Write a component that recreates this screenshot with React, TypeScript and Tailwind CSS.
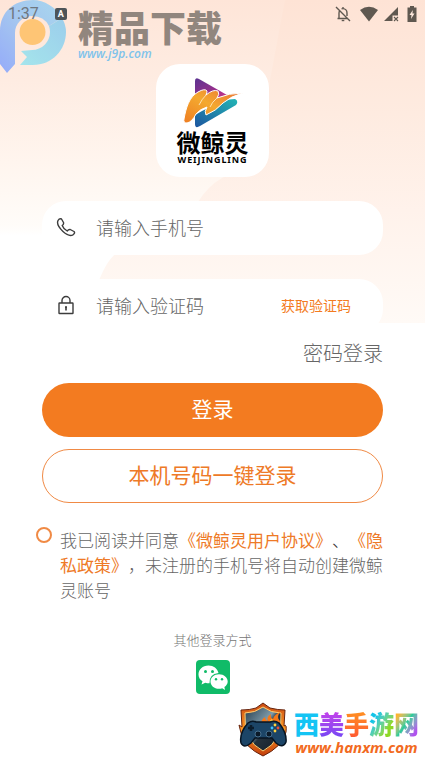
import type { ReactNode } from "react";

function Backdrop() {
  return (
    <svg
      className="absolute inset-x-0 top-0 -z-10 h-[323px] w-full"
      viewBox="0 0 425 323"
      preserveAspectRatio="none"
      aria-hidden="true"
    >
      <defs>
        <linearGradient id="bgLeft" x1="0" y1="0" x2="0" y2="1">
          <stop offset="0" stopColor="#fee5d8" />
          <stop offset="0.25" stopColor="#feece2" />
          <stop offset="0.5" stopColor="#fff5ee" />
          <stop offset="0.7" stopColor="#fffcf9" />
          <stop offset="0.73" stopColor="#ffffff" />
          <stop offset="1" stopColor="#ffffff" />
        </linearGradient>
        <linearGradient id="bgRight" x1="0" y1="0" x2="0" y2="1">
          <stop offset="0" stopColor="#fee3d5" />
          <stop offset="0.35" stopColor="#feebe0" />
          <stop offset="0.65" stopColor="#fff2eb" />
          <stop offset="1" stopColor="#fffaf6" />
        </linearGradient>
      </defs>
      <rect width="425" height="323" fill="url(#bgLeft)" />
      <path d="M425 0H285L270 80Q262 158 222 178Q208 186 198 202L120 250Q108 258 100 278L80 323H425Z" fill="url(#bgRight)" />
    </svg>
  );
}

function StatusBar() {
  return (
    <div className="relative z-10 flex h-7 items-center justify-between pr-2 pl-2 text-[#5f5850]">
      <div className="flex items-center gap-4">
        <span className="font-[Roboto,sans-serif] text-base leading-7 text-[#6f7780]">1:37</span>
        <span
          className="flex size-3 items-center justify-center rounded-xs bg-[#4d5458] font-[Roboto,sans-serif] text-[9px] leading-3 font-bold text-white"
        >
          A
        </span>
      </div>
      <div className="flex items-center gap-2" aria-hidden="true">
        <svg className="size-4" viewBox="0 0 16 16" fill="none" stroke="currentColor" strokeWidth="1.4">
          <path d="M1 1l14 14M4 12V7c0-1.200.4-2 1-2.700M6.500 3C7 2.700 7.500 2.600 8 2.600c2.400 0 4 2 4 4.400v3M2.500 12.500h10M8 1v1.600" />
          <path d="M6.700 14.500h2.600" />
        </svg>
        <div className="flex items-center gap-1">
          <svg className="h-4 w-5" viewBox="0 0 20 16" fill="currentColor">
            <path d="M1 4Q10-2.500 19 4L10 15.500Z" />
          </svg>
          <svg className="size-4" viewBox="0 0 16 16" fill="currentColor">
            <path d="M15 1v8.500H9.500V15H1Z" />
            <path d="M11 11l4 4m0-4l-4 4" stroke="currentColor" strokeWidth="1.100" />
          </svg>
        </div>
        <svg className="h-4 w-2.5" viewBox="0 0 10 16">
          <path d="M3 0h4v1.500h2.500V16h-9V1.500H3Z" fill="currentColor" />
          <path d="M5.800 4L2.500 9h2L4 13l3.500-5.500h-2Z" fill="#fee9dd" />
        </svg>
      </div>
    </div>
  );
}

function DownloadMark() {
  return (
    <div className="absolute top-0 left-0 flex gap-3">
      <svg className="h-[74px] w-[66px] opacity-80" viewBox="0 0 66 74" aria-hidden="true">
        <defs>
          <linearGradient id="pStem" x1="0" y1="1" x2="1" y2="0">
            <stop offset="0" stopColor="#7b9cff" />
            <stop offset="0.5" stopColor="#8fbff5" />
            <stop offset="1" stopColor="#93d3f4" />
          </linearGradient>
          <linearGradient id="pTail" x1="0" y1="1" x2="1" y2="0">
            <stop offset="0" stopColor="#8fe4ef" />
            <stop offset="1" stopColor="#84c8f0" />
          </linearGradient>
        </defs>
        <path
          d="M0 31C0 12 14 0 33 0C44 0 56 7 62 18L49 26Q44 16 32 16C22 16 15 24 15 33V64L7 73L0 64Z"
          fill="url(#pStem)"
        />
        <path d="M62 18Q66 25 66 32C66 50 52 65 33 65H20L27 57L21 51L32 50C42 50 50 42 50 32Q50 29 49 26Z" fill="url(#pTail)" />
        <circle cx="32.500" cy="32" r="13" fill="#ffbd5c" />
      </svg>
      <div className="pt-1">
        <p className="font-['Noto_Sans_CJK_SC',sans-serif] text-4xl leading-11 font-black text-[#91867e]">精品下载</p>
        <p className="font-['Open_Sans',sans-serif] text-xs leading-3 font-semibold text-[#80c3eb] italic">www.j9p.com</p>
      </div>
    </div>
  );
}

function AppLogo() {
  return (
    <div className="mx-auto mt-9 flex h-[113px] w-[113px] flex-col items-center rounded-3xl bg-white pt-3">
      <svg className="h-[52px] w-[62px]" viewBox="0 0 62 52" aria-hidden="true">
        <defs>
          <linearGradient id="lgPurple" x1="0" y1="0" x2="1" y2="1">
            <stop offset="0" stopColor="#5b3391" />
            <stop offset="0.6" stopColor="#9a2f8c" />
            <stop offset="1" stopColor="#d0358a" />
          </linearGradient>
          <linearGradient id="lgBlue" x1="0" y1="1" x2="1" y2="0">
            <stop offset="0" stopColor="#1d559f" />
            <stop offset="1" stopColor="#22b5b5" />
          </linearGradient>
          <linearGradient id="lgGold" x1="0" y1="1" x2="1" y2="0">
            <stop offset="0" stopColor="#ee7d22" />
            <stop offset="0.5" stopColor="#f4a92f" />
            <stop offset="1" stopColor="#ea6f35" />
          </linearGradient>
        </defs>
        <path d="M13 5Q13 1 17 3L45 19L30 24L13 24Z" fill="url(#lgPurple)" />
        <path d="M13 39L20 35L42 24L53 23Q57 25 54 29L18 50Q13 53 13 48Z" fill="url(#lgBlue)" />
        <path
          d="M2 43C4 32 7 21 16 16Q23 12 25 15Q25 17 24 19Q31 13 36 15Q38 18 35 22Q47 17 61 17Q49 20 41 27Q34 35 24 39Q22 36 25 31Q18 33 14 38Q10 46 5 47Q1 47 2 43Z"
          fill="url(#lgGold)"
          stroke="#fff"
          strokeWidth="1"
          strokeLinejoin="round"
        />
        <path d="M24 19Q20 23 17 29M35 22Q30 26 28 31" fill="none" stroke="#fff0cf" strokeWidth="0.800" />
      </svg>
      <p className="font-['Noto_Sans_CJK_SC',sans-serif] text-2xl leading-7 font-bold text-black">微鲸灵</p>
      <p className="font-['Noto_Sans',sans-serif] text-[9px] leading-2 font-bold tracking-widest text-black">WEIJINGLING</p>
    </div>
  );
}

function PhoneIcon() {
  return (
    <svg className="size-5" viewBox="0 0 20 20" fill="none" stroke="#3c3c3c" strokeWidth="1.400" strokeLinejoin="round" aria-hidden="true">
      <path d="M2 3.500Q3.500 1 5.500 2L7.500 5.500Q8 7 6.200 8.500Q7.500 12 11.200 14Q12.500 12.200 14.200 12.500L18 14.500Q19.500 16 17 17.800Q13 20 7 14.500Q0 8 2 3.500Z" />
    </svg>
  );
}

function LockIcon() {
  return (
    <svg className="size-5" viewBox="0 0 20 20" fill="none" stroke="#3c3c3c" strokeWidth="1.400" aria-hidden="true">
      <rect x="3" y="8" width="14" height="10.500" rx="0.500" />
      <path d="M6 8V5.500a4 4 0 0 1 8 0V8" />
      <path d="M10 11.500v4M9 12h2" strokeWidth="1.600" />
    </svg>
  );
}

function Field({ id, label, icon, children }: { id: string; label: string; icon: ReactNode; children?: ReactNode }) {
  return (
    <div className="flex h-[54px] items-center rounded-3xl bg-white pr-8 pb-0.5 pl-3.5">
      <label htmlFor={id} aria-label={label}>
        {icon}
      </label>
      <input
        id={id}
        type="tel"
        placeholder={label}
        className="ml-5 h-8 min-w-0 flex-1 bg-transparent text-lg font-light text-[#666666] outline-none placeholder:text-[#666666]"
      />
      {children}
    </div>
  );
}

function WeChatIcon() {
  return (
    <svg className="size-[34px]" viewBox="0 0 34 34" aria-hidden="true">
      <rect width="34" height="34" rx="4" fill="#10bb68" />
      <path d="M12.500 5.500C6.500 5.500 2.500 9.500 2.500 14.500c0 3 1.500 5.300 4 6.800L5.500 24.500l3.800-1.700q1.800.5 4.200.5Q13 14 22.500 13C21.500 8.500 17.500 5.500 12.500 5.500Z" fill="#fff" />
      <path d="M23 14.200c-5 0-8.500 3.300-8.500 7.300s3.500 7.300 8.500 7.300q1.800 0 3.200-.5L29 30l-.6-3c2-1.300 3.300-3.200 3.300-5.500 0-4-3.700-7.300-8.700-7.300Z" fill="#fff" />
      <g fill="#10bb68">
        <circle cx="9.500" cy="11.500" r="1.500" />
        <circle cx="16.500" cy="11.500" r="1.500" />
        <circle cx="20" cy="19.300" r="1.200" />
        <circle cx="26" cy="19.300" r="1.200" />
      </g>
    </svg>
  );
}

function SiteMark() {
  return (
    <div className="absolute right-1.5 bottom-0 flex items-end gap-1.5">
      <svg className="h-[56px] w-[50px]" viewBox="0 0 50 56" aria-hidden="true">
        <defs>
          <linearGradient id="shieldFire" x1="0" y1="0" x2="0" y2="1">
            <stop offset="0" stopColor="#c94a12" />
            <stop offset="0.5" stopColor="#ff9a24" />
            <stop offset="1" stopColor="#c23d0b" />
          </linearGradient>
          <linearGradient id="shieldCore" x1="0" y1="0" x2="1" y2="1">
            <stop offset="0" stopColor="#243a4b" />
            <stop offset="0.45" stopColor="#7f9cab" />
            <stop offset="0.55" stopColor="#24323d" />
            <stop offset="1" stopColor="#111b27" />
          </linearGradient>
        </defs>
        <path d="M25 2L32 7Q40 9 47 9L46 25Q49 22 48 31Q44 46 25 55Q6 46 3 32L1 24L4 26L3 9Q12 9 18 7Z" fill="url(#shieldFire)" stroke="#67230d" />
        <path d="M25 6Q33 12 43 12Q45 40 25 50Q5 40 7 12Q17 12 25 6Z" fill="url(#shieldCore)" stroke="#ffd074" />
        <path d="M24 24Q22 19 27 16Q27 19 30 20Q28 16 33 13Q32 17 35 18Q36 14 42 11Q38 17 42 20Q42 25 38 28H27Z" fill="#f77716" />
        <path d="M31 24Q30 21 34 18Q35 22 39 20Q39 24 36 26Z" fill="#ffd34c" />
        <path
          d="M10 22Q14 19 18 21H32Q37 19 41 22Q49 32 48 41Q45 48 38 42L34 37H17L13 42Q6 48 3 42Q1 32 10 22Z"
          fill="#1c4567"
          stroke="#071523"
          strokeWidth="1.500"
        />
        <path d="M10 27h6M13 24v6" stroke="#0b1c2c" strokeWidth="2.500" />
        <circle cx="20" cy="33" r="3" fill="#0b1a29" stroke="#47708f" />
        <circle cx="31" cy="33" r="3" fill="#0b1a29" stroke="#47708f" />
        <circle cx="37" cy="24" r="1.400" fill="#ffd23d" />
        <circle cx="40" cy="27" r="1.400" fill="#f04c35" />
        <circle cx="34" cy="27" r="1.400" fill="#3cc3ff" />
        <circle cx="37" cy="30" r="1.400" fill="#ffd23d" />
      </svg>
      <div className="flex flex-col items-center">
        <p className="font-['Noto_Sans_CJK_SC',sans-serif] text-[25px] leading-7 font-black">
          <span className="text-[#14c4f4]">西</span>
          <span className="bg-linear-to-b from-[#d838e8] to-[#6a45f5] bg-clip-text text-transparent">美</span>
          <span className="bg-linear-to-b from-[#ff9b18] to-[#ff4f32] bg-clip-text text-transparent">手</span>
          <span className="bg-linear-to-br from-[#12c4e8] from-30% to-[#8ed827] to-70% bg-clip-text text-transparent">游</span>
          <span className="bg-linear-to-br from-[#ffb428] from-20% via-[#25cb9b] to-[#b052ee] to-80% bg-clip-text text-transparent">网</span>
        </p>
        <p className="font-['Open_Sans',sans-serif] text-[15px] leading-5 font-bold text-[#f26a21] italic">www.hanxm.com</p>
      </div>
    </div>
  );
}

export default function App() {
  return (
    <main className="relative isolate min-h-screen overflow-hidden bg-white font-['Noto_Sans_CJK_SC',sans-serif]">
      <Backdrop />
      <StatusBar />
      <DownloadMark />
      <AppLogo />
      <form className="mx-[42px] mt-6" onSubmit={(event) => event.preventDefault()}>
        <div className="flex flex-col gap-6">
          <Field id="phone" label="请输入手机号" icon={<PhoneIcon />} />
          <Field id="code" label="请输入验证码" icon={<LockIcon />}>
            <button type="button" className="text-sm text-[#f37b20]">
              获取验证码
            </button>
          </Field>
        </div>
        <div className="mt-1 flex justify-end">
          <a href="#password" className="text-xl leading-8 font-light text-[#666666]">
            密码登录
          </a>
        </div>
        <button type="submit" className="mt-3.5 h-[54px] w-full rounded-full bg-[#f37b20] pb-0.5 text-[21px] text-white">
          登录
        </button>
        <button
          type="button"
          className="mt-3 h-[54px] w-full rounded-full border border-[#f08a45] bg-white pb-0.5 text-[21px] text-[#ee7a27]"
        >
          本机号码一键登录
        </button>
      </form>
      <div className="mx-9 mt-6 flex gap-2">
        <input
          id="agree"
          type="checkbox"
          className="size-4 shrink-0 appearance-none rounded-full border-2 border-[#f08a45] checked:bg-[#f37b20]"
        />
        <label htmlFor="agree" className="text-[17px] leading-[25px] font-light text-[#666666] [text-spacing-trim:space-all]">
          我已阅读并同意
          <a href="#terms" className="font-normal text-[#ee7a27]">
            《微鲸灵用户协议》
          </a>
          <span className="text-[#333333]">、</span>
          <a href="#privacy" className="font-normal text-[#ee7a27]">
            《隐私政策》
          </a>
          ，未注册的手机号将自动创建微鲸灵账号
        </label>
      </div>
      <div className="mt-7 flex flex-col items-center gap-2.5 pb-14">
        <p className="text-[13px] leading-5 font-light text-[#757575]">其他登录方式</p>
        <button type="button" aria-label="微信登录">
          <WeChatIcon />
        </button>
      </div>
      <SiteMark />
    </main>
  );
}
